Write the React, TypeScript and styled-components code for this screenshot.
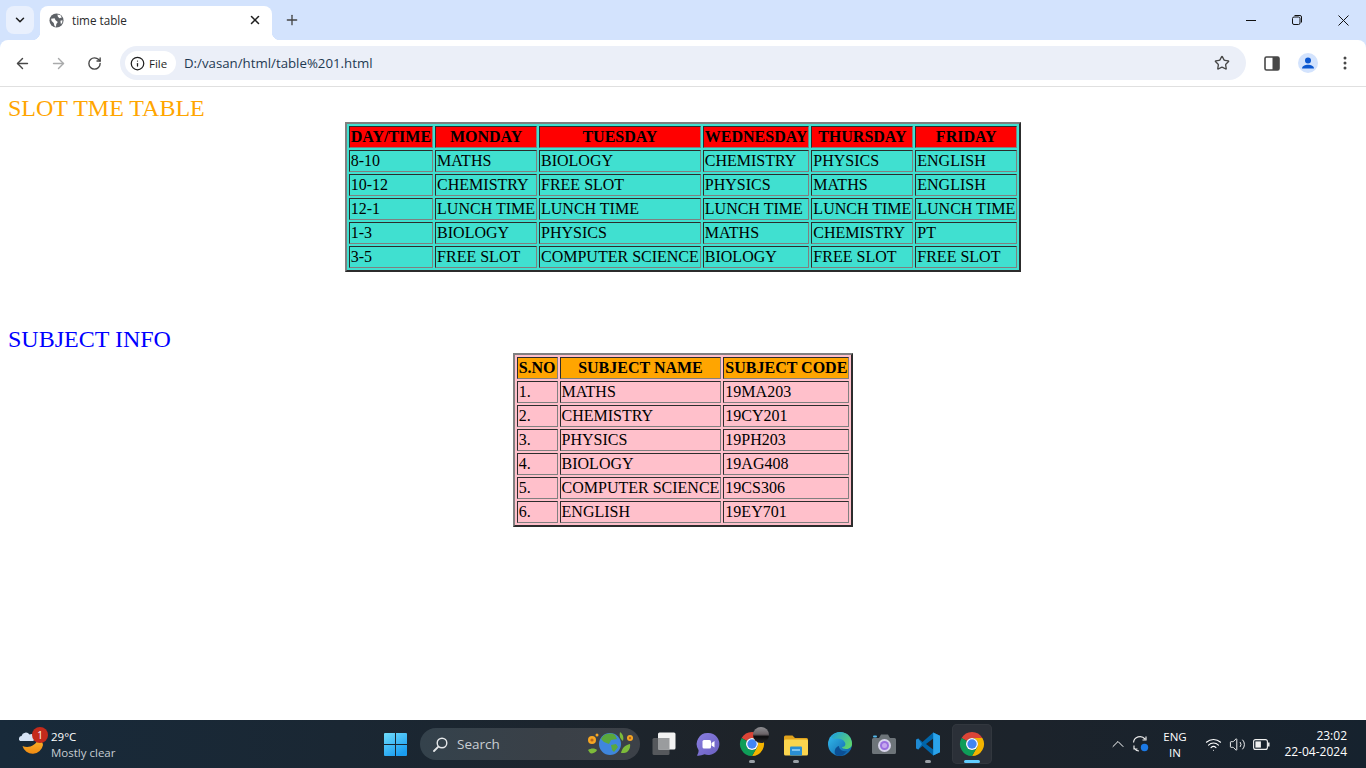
import React from "react";
import styled, { createGlobalStyle } from "styled-components";
import { ArrowLeft, ArrowRight, RotateCw, Info, Star, ChevronDown, X, Plus, Minus, ChevronUp, Volume2, Wifi } from "lucide-react";

const Global = createGlobalStyle`
  html, body { margin: 0; padding: 0; height: 100%; overflow: hidden; background: #fff; }
  #root { height: 100%; }
`;

const UI = `"Open Sans", "Noto Sans", sans-serif`;

const Screen = styled.div`
  width: 1366px; height: 768px; display: flex; flex-direction: column; overflow: hidden;
`;
const TabStrip = styled.div`
  height: 40px; flex: none; background: #d3e3fd; display: flex; align-items: flex-end; padding-left: 6px; font-family: ${UI};
`;
const TabListButton = styled.div`
  width: 28px; height: 28px; margin-bottom: 6px; border-radius: 8px; background: #e9f0fd; display: flex; align-items: center; justify-content: center; color: #1f1f1f;
`;
const Tab = styled.div`
  position: relative; width: 232px; height: 34px; margin-left: 6px; background: #fff; border-radius: 8px 8px 0 0; display: flex; align-items: center; padding: 0 9px 6px; box-sizing: border-box; color: #1f1f1f;
  &::before, &::after { content: ""; position: absolute; bottom: 0; width: 8px; height: 8px; }
  &::before { left: -8px; background: radial-gradient(circle at 0 0, transparent 8px, #fff 8.5px); }
  &::after { right: -8px; background: radial-gradient(circle at 100% 0, transparent 8px, #fff 8.5px); }
`;
const TabTitle = styled.span`
  font-size: 11.7px; margin-left: 8px; flex: 1; color: #2a2a2a;
`;
const NewTab = styled.div`
  width: 40px; height: 34px; display: flex; align-items: center; justify-content: center; color: #444; padding-bottom: 6px; box-sizing: border-box;
`;
const WindowControls = styled.div`
  margin-left: auto; height: 40px; display: flex; align-items: center; color: #111;
`;
const WinButton = styled.div`
  width: 46px; height: 40px; display: flex; align-items: center; justify-content: center;
`;
const Toolbar = styled.div`
  height: 46px; flex: none; background: #fff; border-bottom: 1px solid #e0e0e0; border-radius: 8px 8px 0 0; display: flex; align-items: center; padding-left: 4px; font-family: ${UI};
`;
const ToolbarWrap = styled.div`
  background: #d3e3fd; flex: none;
`;
const NavButton = styled.div<{ $muted?: boolean }>`
  width: 36px; height: 36px; display: flex; align-items: center; justify-content: center; color: ${(p) => (p.$muted ? "#a9aaab" : "#474747")};
`;
const Omnibox = styled.div`
  flex: none; width: 1126px; height: 34px; margin-left: 8px; background: #ebeff8; border-radius: 17px; display: flex; align-items: center; padding: 0 16px 0 5px; box-sizing: border-box;
`;
const FileChip = styled.div`
  width: 51px; height: 24px; background: #fff; border-radius: 12px; display: flex; align-items: center; padding-left: 5px; gap: 4px; box-sizing: border-box; font-size: 11.5px; color: #1f1f1f; font-weight: 500;
`;
const Url = styled.span`
  font-size: 13.25px; color: #1f3a52; margin-left: 8px; flex: 1;
`;
const ToolbarIcons = styled.div`
  display: flex; align-items: center; margin-left: 8px;
`;
const ToolSlot = styled.div<{ $w: number }>`
  width: ${(p) => p.$w}px; height: 36px; display: flex; align-items: center; justify-content: center;
`;
const Page = styled.main`
  flex: 1; min-height: 0; padding: 8px; font-family: "Liberation Serif", "Times New Roman", serif; font-size: 16px; color: #000; background: #fff; box-sizing: border-box;
`;
const Heading = styled.div<{ $color: string; $top?: number }>`
  font-size: 24px; line-height: 27px; color: ${(p) => p.$color}; margin-top: ${(p) => p.$top || 0}px;
`;
const Table = styled.table<{ $bg: string; $head: string }>`
  margin: 0 auto; border: 2px outset gray; border-collapse: separate; border-spacing: 2px; background: ${(p) => p.$bg}; font-size: 16px; line-height: 18px;
  th, td { border: 1px inset gray; padding: 1px; white-space: nowrap; }
  th { background: ${(p) => p.$head}; font-weight: bold; text-align: center; }
  td { text-align: left; }
`;
const Taskbar = styled.footer`
  height: 48px; flex: none; display: grid; grid-template-columns: 375px auto 1fr; align-items: center; background: linear-gradient(90deg, #182a3a 0%, #1a2733 25%, #1e2329 55%, #1c232b 75%, #16222e 100%); font-family: ${UI}; color: #fff;
`;
const Weather = styled.div`
  display: flex; align-items: center; padding-left: 18px; gap: 3px;
`;
const WeatherIcon = styled.div`
  position: relative; width: 30px; height: 30px;
`;
const Badge = styled.span`
  position: absolute; left: 14px; top: -2px; width: 16px; height: 16px; border-radius: 50%; background: #c42b1c; font-size: 10px; line-height: 16px; text-align: center; color: #fff;
`;
const WeatherText = styled.div`
  display: flex; flex-direction: column; font-size: 11.5px; line-height: 16px; color: #fff; padding-top: 1px;
`;
const Muted = styled.span`
  color: #c6ccd2;
`;
const Center = styled.div`
  display: flex; align-items: center;
`;
const Slot = styled.div<{ $active?: boolean; $dot?: boolean }>`
  position: relative; width: 44px; height: 40px; display: flex; align-items: center; justify-content: center; box-sizing: border-box;
  ${(p) => p.$active && `width: 40px; margin-left: 2px; background: #2b3038; border-radius: 5px; box-shadow: inset 0 0 0 1px #32373e;`}
  &::after { content: ""; position: absolute; bottom: 1px; left: 50%; transform: translateX(-50%); border-radius: 2px;
    width: ${(p) => (p.$active ? 16 : p.$dot ? 6 : 0)}px; height: 3px; background: ${(p) => (p.$active ? "#60cdff" : "#9aa0a6")}; }
`;
const StartSlot = styled.div`
  width: 23px; height: 23px; margin: 0 13px 0 9px;
`;
const SearchPill = styled.div`
  width: 220px; height: 32px; border-radius: 16px; background: linear-gradient(90deg, #34424c, #3a4047 60%, #3c4148); display: flex; align-items: center; padding-left: 13px; box-sizing: border-box; font-size: 13.5px; color: #c9ced3; margin-right: 2px; gap: 9px;
`;
const SearchText = styled.span`
  flex: 1;
`;
const Tray = styled.div`
  display: flex; align-items: center; justify-content: flex-end; padding-right: 19px; color: #fff;
`;
const TrayIcon = styled.div<{ $w: number }>`
  width: ${(p) => p.$w}px; display: flex; justify-content: center; align-items: center;
`;
const Lang = styled.div`
  width: 46px; margin-right: 3px; padding-top: 1px; text-align: center; font-size: 11.5px; line-height: 16px; display: flex; flex-direction: column;
`;
const Clock = styled.div`
  margin-left: 4px; text-align: right; font-size: 12px; line-height: 16px; display: flex; flex-direction: column; width: 70px;
`;

const Chrome = ({ avatar }: { avatar?: boolean }) => (
  <svg width="24" height="24" viewBox="0 0 24 24" style={{ overflow: "visible" }}>
    <path fill="#db4437" d="M1.6 6A12 12 0 0 1 22.4 6H12A6 6 0 0 0 6.8 9Z" />
    <path fill="#f4b400" d="M22.4 6A12 12 0 0 1 12 24L17.2 15A6 6 0 0 0 12 6Z" />
    <path fill="#0f9d58" d="M12 24A12 12 0 0 1 1.6 6L6.8 9A6 6 0 0 0 17.2 15Z" />
    <circle cx="12" cy="12" r="6" fill="#fff" />
    <circle cx="12" cy="12" r="4.7" fill="#4285f4" />
    {avatar && (
      <g>
        <defs>
          <linearGradient id="av" x1="0" y1="0" x2="0" y2="1">
            <stop offset="0" stopColor="#8e8e92" />
            <stop offset="0.45" stopColor="#6a6266" />
            <stop offset="0.6" stopColor="#0c0c0e" />
            <stop offset="1" stopColor="#2a2a2c" />
          </linearGradient>
        </defs>
        <circle cx="21" cy="3" r="8" fill="url(#av)" />
      </g>
    )}
  </svg>
);

const slot = [
  ["DAY/TIME", "MONDAY", "TUESDAY", "WEDNESDAY", "THURSDAY", "FRIDAY"],
  ["8-10", "MATHS", "BIOLOGY", "CHEMISTRY", "PHYSICS", "ENGLISH"],
  ["10-12", "CHEMISTRY", "FREE SLOT", "PHYSICS", "MATHS", "ENGLISH"],
  ["12-1", "LUNCH TIME", "LUNCH TIME", "LUNCH TIME", "LUNCH TIME", "LUNCH TIME"],
  ["1-3", "BIOLOGY", "PHYSICS", "MATHS", "CHEMISTRY", "PT"],
  ["3-5", "FREE SLOT", "COMPUTER SCIENCE", "BIOLOGY", "FREE SLOT", "FREE SLOT"],
];
const subjects = [
  ["S.NO", "SUBJECT NAME", "SUBJECT CODE"],
  ["1.", "MATHS", "19MA203"],
  ["2.", "CHEMISTRY", "19CY201"],
  ["3.", "PHYSICS", "19PH203"],
  ["4.", "BIOLOGY", "19AG408"],
  ["5.", "COMPUTER SCIENCE", "19CS306"],
  ["6.", "ENGLISH", "19EY701"],
];

const DataTable = ({ rows, bg, head }: { rows: string[][]; bg: string; head: string }) => (
  <Table $bg={bg} $head={head}>
    <thead>
      <tr>{rows[0].map((c) => <th key={c}>{c}</th>)}</tr>
    </thead>
    <tbody>
      {rows.slice(1).map((r) => (
        <tr key={r[0]}>{r.map((c, i) => <td key={i}>{c}</td>)}</tr>
      ))}
    </tbody>
  </Table>
);

export default function App() {
  return (
    <Screen>
      <Global />
      <TabStrip>
        <TabListButton><ChevronDown size={14} strokeWidth={2.6} /></TabListButton>
        <Tab>
          <svg width="15" height="15" viewBox="0 0 16 16">
            <circle cx="8" cy="8" r="7.5" fill="#5f6368" />
            <path fill="#fff" d="M2.2 6.2 6 5.6l1 2 2.4 2-1.6 2-.4 3-1.4-.4-1-3.6-2.2-2zM9 1.6l3.4.9 1.2 2.4-2.6.6L9.4 3.8zM12.2 8.2l2.2-.6-.4 3-1.4 1.2z" />
          </svg>
          <TabTitle>time table</TabTitle>
          <X size={14} strokeWidth={2.6} style={{ marginRight: 1 }} />
        </Tab>
        <NewTab><Plus size={16} strokeWidth={2} /></NewTab>
        <WindowControls>
          <WinButton>
            <svg width="10" height="10" viewBox="0 0 10 10" stroke="#111" strokeWidth="1"><path d="M0 5.500h10" /></svg>
          </WinButton>
          <WinButton>
            <svg width="12" height="12" viewBox="0 0 12 12" fill="none" stroke="#111" strokeWidth="1">
              <rect x="1.5" y="3" width="7.5" height="7.5" rx="1.5" />
              <path d="M3.500 1.500h5.500a1.500 1.500 0 0 1 1.500 1.500v5.500" />
            </svg>
          </WinButton>
          <WinButton>
            <svg width="11" height="11" viewBox="0 0 11 11" stroke="#111" strokeWidth="1"><path d="M.5.500l10 10M10.500.500l-10 10" /></svg>
          </WinButton>
        </WindowControls>
      </TabStrip>
      <ToolbarWrap>
        <Toolbar>
          <NavButton><ArrowLeft size={17} strokeWidth={2} /></NavButton>
          <NavButton $muted><ArrowRight size={17} strokeWidth={2} /></NavButton>
          <NavButton><RotateCw size={15} strokeWidth={2.2} /></NavButton>
          <Omnibox>
            <FileChip><Info size={15} strokeWidth={2} />File</FileChip>
            <Url>D:/vasan/html/table%201.html</Url>
            <Star size={16} strokeWidth={2} color="#474747" />
          </Omnibox>
          <ToolbarIcons>
            <ToolSlot $w={36}>
              <svg width="16" height="15" viewBox="0 0 16 15">
                <rect x="1" y="1" width="14" height="13" rx="1.5" fill="#fff" stroke="#474747" strokeWidth="1.6" />
                <rect x="8.5" y="1" width="6.5" height="13" fill="#474747" />
              </svg>
            </ToolSlot>
            <ToolSlot $w={36}>
              <svg width="20" height="20" viewBox="0 0 20 20">
                <circle cx="10" cy="10" r="10" fill="#d3e3fd" />
                <circle cx="10" cy="7.6" r="3" fill="#0b57d0" />
                <path d="M4 15.5c0-2.6 3.2-3.8 6-3.8s6 1.2 6 3.8z" fill="#0b57d0" />
              </svg>
            </ToolSlot>
            <ToolSlot $w={38}>
              <svg width="4" height="14" viewBox="0 0 4 14" fill="#474747">
                <circle cx="2" cy="2" r="1.5" /><circle cx="2" cy="7" r="1.5" /><circle cx="2" cy="12" r="1.5" />
              </svg>
            </ToolSlot>
          </ToolbarIcons>
        </Toolbar>
      </ToolbarWrap>
      <Page>
        <Heading $color="orange">SLOT TME TABLE</Heading>
        <DataTable rows={slot} bg="turquoise" head="red" />
        <Heading $color="blue" $top={54}>SUBJECT INFO</Heading>
        <DataTable rows={subjects} bg="pink" head="orange" />
      </Page>
      <Taskbar>
        <Weather>
          <WeatherIcon>
            <svg width="30" height="30" viewBox="0 0 30 30">
              <defs>
                <linearGradient id="moon" x1="0" y1="0" x2="0" y2="1">
                  <stop offset="0" stopColor="#fdb92e" />
                  <stop offset="1" stopColor="#f08a12" />
                </linearGradient>
              </defs>
              <path fill="url(#moon)" d="M4.500 17c6 2.500 13 0 16-7.500 2.500 1.500 4.500 4 4.500 6.500a10.500 10.500 0 0 1-20.500 1z" />
              <path fill="#d6e4f6" d="M2 12a2.800 2.800 0 0 1 1.500-5 4.500 4.500 0 0 1 8-1.500 3 3 0 0 1 3.500 6.500z" />
            </svg>
            <Badge>1</Badge>
          </WeatherIcon>
          <WeatherText>
            <span>29°C</span>
            <Muted>Mostly clear</Muted>
          </WeatherText>
        </Weather>
        <Center>
          <StartSlot>
            <svg width="23" height="23" viewBox="0 0 23 23">
              <defs>
                <linearGradient id="win" x1="0" y1="0" x2="0.6" y2="1">
                  <stop offset="0" stopColor="#6fdcfb" />
                  <stop offset="1" stopColor="#1a9df0" />
                </linearGradient>
              </defs>
              <path fill="url(#win)" d="M0 1a1 1 0 0 1 1-1h10v11H0zM12 0h10a1 1 0 0 1 1 1v10H12zM0 12h11v11H1a1 1 0 0 1-1-1zM12 12h11v10a1 1 0 0 1-1 1H12z" />
            </svg>
          </StartSlot>
          <SearchPill>
            <svg width="15" height="15" viewBox="0 0 15 15" fill="none" stroke="#e6e8ea" strokeWidth="1.4">
              <circle cx="9" cy="6" r="4.8" />
              <path d="M5.4 9.6 1 14" strokeLinecap="round" strokeWidth="1.8" />
            </svg>
            <SearchText>Search</SearchText>
            <svg width="50" height="30" viewBox="0 0 50 30" style={{ marginRight: 4 }}>
              <circle cx="24" cy="15" r="11" fill="#3f86dc" />
              <path fill="#5aa83c" d="M17 7c4-3 9-3 12-1l2 4-6 1-2 4-5-2-3-3zM25 16l5-1 2 3-4 5-2-2z" />
              <circle cx="6" cy="11" r="4" fill="#f6a623" /><circle cx="6" cy="11" r="1.6" fill="#b8651a" />
              <circle cx="44" cy="9" r="3" fill="#f6a623" /><circle cx="44" cy="9" r="1.2" fill="#b8651a" />
              <circle cx="11" cy="6" r="1.500" fill="#f6a623" />
              <path fill="#7dbb3a" d="M2 21c3-2 7-2 9 0-1 3-6 4-7 3zM35 24c1-5 4-8 9-9 1 4-2 9-6 9zM34 3c3 2 4 5 3 9-3-2-4-5-3-9z" />
            </svg>
          </SearchPill>
          <Slot>
            <svg width="24" height="24" viewBox="0 0 24 24">
              <rect x="0.5" y="6" width="17" height="17" rx="1.5" fill="#55585c" />
              <rect x="6" y="0.5" width="17.5" height="17" rx="1.5" fill="#f2f2f2" />
              <rect x="6" y="6" width="11.5" height="11.5" fill="#9a9c9e" />
            </svg>
          </Slot>
          <Slot>
            <svg width="24" height="24" viewBox="0 0 24 24">
              <defs>
                <linearGradient id="tm" x1="0" y1="0" x2="1" y2="1">
                  <stop offset="0" stopColor="#8a7fe0" />
                  <stop offset="1" stopColor="#6a5fc0" />
                </linearGradient>
              </defs>
              <path fill="url(#tm)" d="M12.5 1a11 11 0 1 1-4 21.3C6 23.500 2.500 24 1 23.500c1-1.500 1.800-3.500 1.500-5.500A11 11 0 0 1 12.500 1z" />
              <rect x="6.500" y="8" width="8.500" height="8.500" rx="1.500" fill="#fff" />
              <path fill="#fff" d="m15.500 11 3-2v6.500l-3-2z" />
            </svg>
          </Slot>
          <Slot $dot><Chrome avatar /></Slot>
          <Slot $dot>
            <svg width="24" height="24" viewBox="0 0 24 24">
              <path fill="#e0a21c" d="M0 5a1.500 1.500 0 0 1 1.500-1.500h7l2.500 2.500h11.500A1.500 1.500 0 0 1 24 7.500V10H0z" />
              <rect y="7.500" width="24" height="16" rx="1.500" fill="#fbd54e" />
              <rect x="6" y="14.500" width="12" height="9" rx="1" fill="#2a8fd4" />
              <rect x="8" y="17" width="8" height="2" fill="#7ec4f0" />
            </svg>
          </Slot>
          <Slot>
            <svg width="24" height="24" viewBox="0 0 24 24">
              <defs>
                <linearGradient id="edge1" x1="0" y1="0" x2="1" y2="1">
                  <stop offset="0" stopColor="#35c1f1" />
                  <stop offset="1" stopColor="#0c59a4" />
                </linearGradient>
                <linearGradient id="edge2" x1="0" y1="0" x2="1" y2="0.6">
                  <stop offset="0" stopColor="#1b9de2" />
                  <stop offset="1" stopColor="#5dd36e" />
                </linearGradient>
              </defs>
              <circle cx="12" cy="12" r="12" fill="url(#edge1)" />
              <path fill="url(#edge2)" d="M3 5C6 0 13-1 18 1.500 22 3.500 24 8 24 12c0 3.500-3 5-6 5-2.500 0-4-1-4-2 3 0 4-2 3-4.500C15.500 7 10 5.500 6 7z" />
              <path fill="#0b4f94" d="M11 14c0 3 3 6 8 5-2 3-5 5-8 5-3.500 0-5-3-4-6 .5-2 2-3.500 4-4z" />
            </svg>
          </Slot>
          <Slot>
            <svg width="24" height="22" viewBox="0 0 24 22">
              <path fill="#6d7479" d="M1.500 5H7l2-3.500h7L18 5h4.500A1.500 1.500 0 0 1 24 6.500v13a1.500 1.500 0 0 1-1.500 1.500h-21A1.500 1.500 0 0 1 0 19.500v-13A1.500 1.500 0 0 1 1.500 5z" />
              <rect x="1" y="2.500" width="4" height="2" rx="1" fill="#53b8ea" />
              <circle cx="12.500" cy="12.500" r="6.500" fill="#d8d4ec" />
              <circle cx="12.500" cy="12.500" r="4.500" fill="#9a6fe0" />
              <circle cx="12.500" cy="12.500" r="2.500" fill="#c6a8ee" />
            </svg>
          </Slot>
          <Slot $dot>
            <svg width="24" height="24" viewBox="0 0 24 24">
              <path fill="#0065a9" d="M17.200 23.500 24 20.200V3.800L17.200.5 6.500 10 2.200 6.600 0 7.700v8.600l2.200 1.100 4.300-3.400zM17.200 6.600v10.800L10 12z" />
              <path fill="#2aa3ea" d="M17.200.5 24 3.800v16.400l-6.800 3.300V17.400L17.200 6.600z" />
              <path fill="#1f8ad2" d="M2.200 6.600 0 7.700v8.600l2.200 1.100L6 12z" />
            </svg>
          </Slot>
          <Slot $active><Chrome /></Slot>
        </Center>
        <Tray>
          <TrayIcon $w={24}><ChevronUp size={20} strokeWidth={1.2} /></TrayIcon>
          <TrayIcon $w={22}>
            <svg width="18" height="18" viewBox="0 0 18 18" fill="none" stroke="#e8e8e8" strokeWidth="1.2">
              <path d="M1.500 7.500A6.500 6.500 0 0 1 13 4M14 1.500V5h-3.500M7 16a6.500 6.500 0 0 1-5-3M2 10.500V14h3.500" />
              <circle cx="12.500" cy="12.500" r="3.700" fill="#1b79e6" stroke="none" />
            </svg>
          </TrayIcon>
          <Lang><span>ENG</span><span>IN</span></Lang>
          <TrayIcon $w={24}><Wifi size={17} strokeWidth={1.5} /></TrayIcon>
          <TrayIcon $w={24}><Volume2 size={17} strokeWidth={1.3} /></TrayIcon>
          <TrayIcon $w={24}>
            <svg width="17" height="11" viewBox="0 0 17 11" fill="none" stroke="#f0f0f0" strokeWidth="1.1">
              <rect x="0.600" y="0.600" width="13.800" height="9.800" rx="2" />
              <rect x="2.400" y="2.400" width="5.500" height="6.200" fill="#f0f0f0" stroke="none" />
              <path d="M15.800 3.500v4" strokeWidth="1.500" />
            </svg>
          </TrayIcon>
          <Clock><span>23:02</span><span>22-04-2024</span></Clock>
        </Tray>
      </Taskbar>
    </Screen>
  );
}
